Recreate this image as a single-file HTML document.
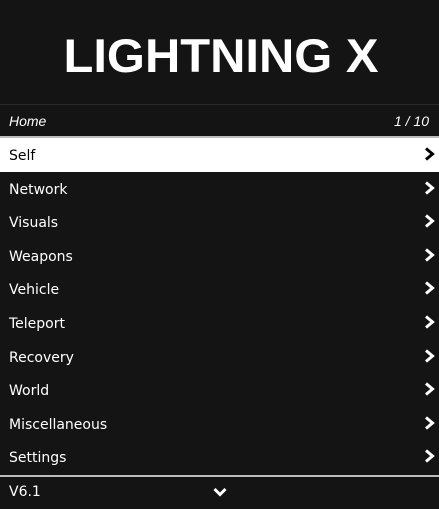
<!DOCTYPE html>
<html><head><style>
body{margin:0;width:439px;height:508px;background:#141414;font-family:"DejaVu Sans","Liberation Sans",sans-serif;color:#fff;overflow:hidden;position:relative}
.hdr{position:absolute;left:0;top:0;width:439px;height:104px;background:#141414;border-bottom:1px solid #2a2a2a}
.sub{position:absolute;top:105px;left:0;width:439px;height:31px;background:#141414;font-family:"Liberation Sans",sans-serif;font-style:italic;font-size:14px;line-height:32px}
.sep{position:absolute;left:0;width:439px;height:2px;background:#bdbdbd}
.row{position:absolute;left:0;width:439px;height:33.6px;line-height:36.5px;font-size:14px}
.row span{position:absolute;left:9px}
.row svg{position:absolute;right:4px;top:9px}
.sel{background:#fff;color:#000}
</style></head><body>
<div class="hdr"><svg width="439" height="104"><text x="221" y="72" text-anchor="middle" font-family="Liberation Sans,sans-serif" font-weight="bold" font-size="47" fill="#fff" textLength="315" lengthAdjust="spacingAndGlyphs">LIGHTNING X</text></svg></div>
<div class="sub"><span style="position:absolute;left:9px">Home</span><span style="position:absolute;right:10px">1 / 10</span></div>
<div class="sep" style="top:136px"></div>
<div class="row sel" style="top:138px"><span>Self</span><svg width="12" height="14"><path d="M3 1.5L9.5 7 3 12.5" stroke="#000" stroke-width="3" fill="none"/></svg></div>
<div class="row" style="top:171.6px"><span>Network</span><svg width="12" height="14"><path d="M3 1.5L9.5 7 3 12.5" stroke="#fff" stroke-width="3" fill="none"/></svg></div>
<div class="row" style="top:205.2px"><span>Visuals</span><svg width="12" height="14"><path d="M3 1.5L9.5 7 3 12.5" stroke="#fff" stroke-width="3" fill="none"/></svg></div>
<div class="row" style="top:238.8px"><span>Weapons</span><svg width="12" height="14"><path d="M3 1.5L9.5 7 3 12.5" stroke="#fff" stroke-width="3" fill="none"/></svg></div>
<div class="row" style="top:272.4px"><span>Vehicle</span><svg width="12" height="14"><path d="M3 1.5L9.5 7 3 12.5" stroke="#fff" stroke-width="3" fill="none"/></svg></div>
<div class="row" style="top:306px"><span>Teleport</span><svg width="12" height="14"><path d="M3 1.5L9.5 7 3 12.5" stroke="#fff" stroke-width="3" fill="none"/></svg></div>
<div class="row" style="top:339.6px"><span>Recovery</span><svg width="12" height="14"><path d="M3 1.5L9.5 7 3 12.5" stroke="#fff" stroke-width="3" fill="none"/></svg></div>
<div class="row" style="top:373.2px"><span>World</span><svg width="12" height="14"><path d="M3 1.5L9.5 7 3 12.5" stroke="#fff" stroke-width="3" fill="none"/></svg></div>
<div class="row" style="top:406.8px"><span>Miscellaneous</span><svg width="12" height="14"><path d="M3 1.5L9.5 7 3 12.5" stroke="#fff" stroke-width="3" fill="none"/></svg></div>
<div class="row" style="top:440.4px"><span>Settings</span><svg width="12" height="14"><path d="M3 1.5L9.5 7 3 12.5" stroke="#fff" stroke-width="3" fill="none"/></svg></div>
<div class="sep" style="top:474.5px"></div>
<div class="row" style="top:476px;height:32px;line-height:33px"><span>V6.1</span><svg width="14" height="10" style="left:213px;right:auto;top:11px"><path d="M1.5 2L7 7.5 12.5 2" stroke="#fff" stroke-width="3" fill="none"/></svg></div>
</body></html>
